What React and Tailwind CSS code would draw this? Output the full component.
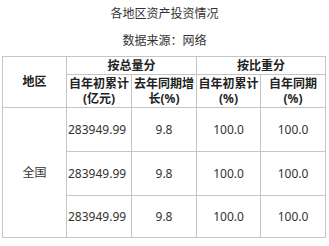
export default function App() {
  const rows = [
    { total: '283949.99', growth: '9.8', ytd: '100.0', yoy: '100.0' },
    { total: '283949.99', growth: '9.8', ytd: '100.0', yoy: '100.0' },
    { total: '283949.99', growth: '9.8', ytd: '100.0', yoy: '100.0' },
  ];
  const font = { fontFamily: '"Noto Sans", "Noto Sans CJK SC", sans-serif' };

  return (
    <div className="w-[329px] h-[246px] bg-white text-[#333] overflow-hidden" style={font}>
      <div className="h-[27px] pt-[1px] flex items-center justify-center text-[12px] text-[#333]">各地区资产投资情况</div>
      <div className="h-[27px] pt-[1px] flex items-center justify-center text-[12px] text-[#333]">数据来源：网络</div>
      <div className="px-[2px] pt-[2px]">
        <table className="w-[324px] border-collapse table-fixed text-[12px]">
          <colgroup>
            <col className="w-[64px]" />
            <col className="w-[65px]" />
            <col className="w-[65px]" />
            <col className="w-[64px]" />
            <col className="w-[65px]" />
          </colgroup>
          <thead className="font-bold text-[#222]">
            <tr className="h-[18px]">
              <th rowSpan={2} className="border border-[#c4c4c4] p-0">地区</th>
              <th colSpan={2} className="border border-[#c4c4c4] p-0 leading-[16px]">按总量分</th>
              <th colSpan={2} className="border border-[#c4c4c4] border-l-[#777] p-0 leading-[16px]">按比重分</th>
            </tr>
            <tr className="h-[33px]">
              <th className="border border-[#c4c4c4] p-0 leading-[15px] font-bold">自年初累计<br />(亿元)</th>
              <th className="border border-[#c4c4c4] p-0 leading-[15px] font-bold whitespace-nowrap">去年同期增<br />长(%)</th>
              <th className="border border-[#c4c4c4] border-l-[#777] p-0 leading-[15px] font-bold">自年初累计<br />(%)</th>
              <th className="border border-[#c4c4c4] p-0 leading-[15px] font-bold">自年同期<br />(%)</th>
            </tr>
          </thead>
          <tbody>
            {rows.map((r, i) => (
              <tr key={i} className={i === 2 ? 'h-[42px]' : 'h-[44px]'}>
                {i === 0 && (
                  <td rowSpan={3} className="border border-[#c4c4c4] p-0 text-center">全国</td>
                )}
                <td className={`border border-[#c4c4c4] ${i === 1 ? 'border-t-[#777]' : ''} p-0 pl-[1px] text-left`}>{r.total}</td>
                <td className={`border border-[#c4c4c4] ${i === 1 ? 'border-t-[#777]' : ''} p-0 text-center`}>{r.growth}</td>
                <td className={`border border-[#c4c4c4] border-l-[#777] ${i === 1 ? 'border-t-[#777]' : ''} p-0 text-center`}>{r.ytd}</td>
                <td className={`border border-[#c4c4c4] ${i === 1 ? 'border-t-[#777]' : ''} p-0 text-center`}>{r.yoy}</td>
              </tr>
            ))}
          </tbody>
        </table>
      </div>
    </div>
  );
}
